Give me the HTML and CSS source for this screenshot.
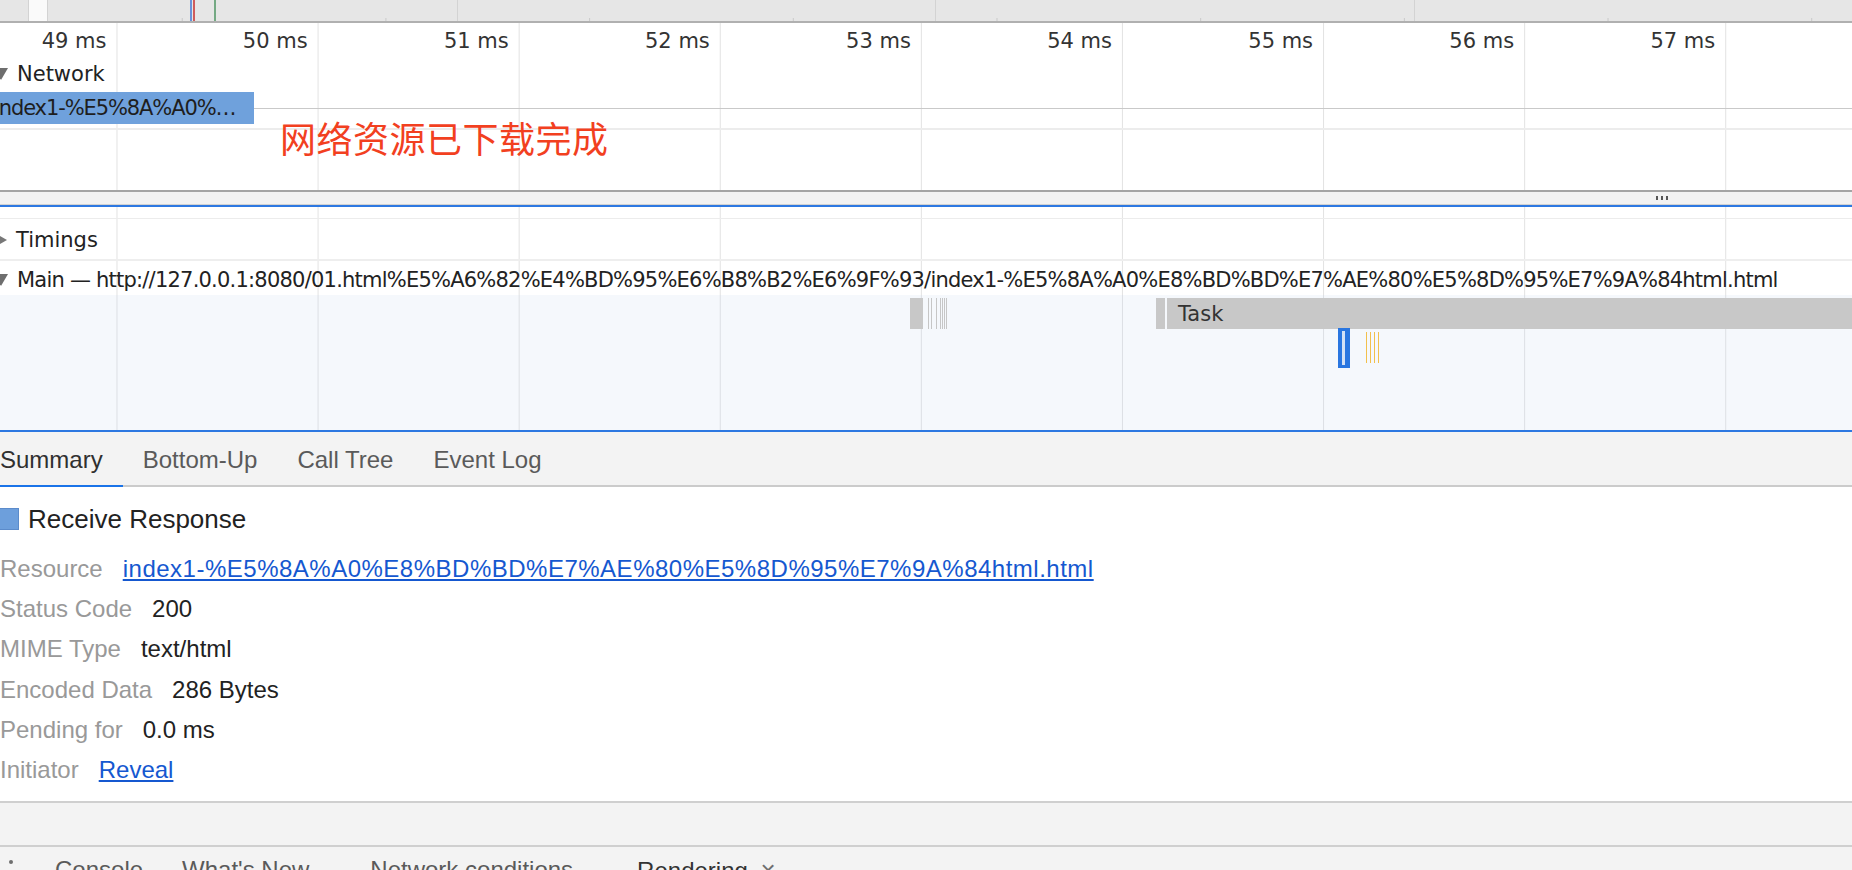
FILE: index.html
```html
<!DOCTYPE html>
<html>
<head>
<meta charset="utf-8">
<title>Performance</title>
<link rel="stylesheet" href="styles.css">
</head>
<body>
<div class="overview">
  <div class="ov-seg ov-a"></div>
  <div class="ov-seg ov-b"></div>
  <div class="ov-seg ov-c"></div>
  <div class="ov-seg ov-d"></div>
  <div class="ov-seg ov-e"></div>
  <div class="ov-seg ov-f"></div>
  <span class="marker m-blue"></span>
  <span class="marker m-red"></span>
  <span class="marker m-green"></span>
</div>

<div class="timeline grid">
  <div class="ruler">
    <div class="tick first">49 ms</div>
    <div class="tick">50 ms</div>
    <div class="tick">51 ms</div>
    <div class="tick">52 ms</div>
    <div class="tick">53 ms</div>
    <div class="tick">54 ms</div>
    <div class="tick">55 ms</div>
    <div class="tick">56 ms</div>
    <div class="tick">57 ms</div>
  </div>
  <div class="track-header net-header"><span class="tri-down"></span><span>Network</span></div>
  <div class="net-track">
    <div class="net-bar"><span class="net-bar-text">index1-%E5%8A%A0%…</span></div>
    <div class="annotation">网络资源已下载完成</div>
  </div>
</div>

<div class="splitter">
  <svg class="grip" width="14" height="6" viewBox="0 0 14 6"><rect x="1" y="1" width="2" height="4" fill="#555"/><rect x="6" y="1" width="2" height="4" fill="#555"/><rect x="11" y="1" width="2" height="4" fill="#555"/></svg>
</div>

<div class="flame grid">
  <div class="flame-ruler"></div>
  <div class="track-header timings"><span class="tri-right"></span><span>Timings</span></div>
  <div class="track-header main-header"><span class="tri-down"></span><span class="url">Main — http://127.0.0.1:8080/01.html%E5%A6%82%E4%BD%95%E6%B8%B2%E6%9F%93/index1-%E5%8A%A0%E8%BD%BD%E7%AE%80%E5%8D%95%E7%9A%84html.html</span></div>
  <div class="flame-canvas">
    <div class="ev ev-gray ev-a"></div>
    <div class="ev ev-line" style="left:928px"></div>
    <div class="ev ev-line" style="left:931px"></div>
    <div class="ev ev-line" style="left:936px"></div>
    <div class="ev ev-line" style="left:940px"></div>
    <div class="ev ev-line" style="left:942px"></div>
    <div class="ev ev-line" style="left:944px"></div>
    <div class="ev ev-line" style="left:946px"></div>
    <div class="ev ev-gray ev-b"></div>
    <div class="ev task">Task</div>
    <div class="ev selected"><span class="sel-inner"></span></div>
    <div class="ev yellow" style="left:1366px"></div>
    <div class="ev yellow" style="left:1370px"></div>
    <div class="ev yellow" style="left:1374px"></div>
    <div class="ev yellow" style="left:1378px"></div>
  </div>
</div>

<div class="tabs">
  <div class="tab active">Summary</div>
  <div class="tab">Bottom-Up</div>
  <div class="tab">Call Tree</div>
  <div class="tab">Event Log</div>
</div>

<div class="summary">
  <div class="sum-title"><span class="swatch"></span><span>Receive Response</span></div>
  <div class="sum-row"><span class="label">Resource</span><a class="link res-link" href="#">index1-%E5%8A%A0%E8%BD%BD%E7%AE%80%E5%8D%95%E7%9A%84html.html</a></div>
  <div class="sum-row"><span class="label">Status Code</span><span class="value">200</span></div>
  <div class="sum-row"><span class="label">MIME Type</span><span class="value">text/html</span></div>
  <div class="sum-row"><span class="label">Encoded Data</span><span class="value">286 Bytes</span></div>
  <div class="sum-row"><span class="label">Pending for</span><span class="value">0.0 ms</span></div>
  <div class="sum-row"><span class="label">Initiator</span><a class="link" href="#">Reveal</a></div>
</div>

<div class="drawer-gap"></div>

<div class="drawer-tabs">
  <svg class="menu-dots" width="6" height="30" viewBox="0 0 6 30"><circle cx="3" cy="2" r="2" fill="#6e6e6e"/><circle cx="3" cy="14" r="2" fill="#6e6e6e"/><circle cx="3" cy="26" r="2" fill="#6e6e6e"/></svg>
  <div class="dtab dt-console">Console</div>
  <div class="dtab dt-new">What's New</div>
  <div class="dtab dt-net">Network conditions</div>
  <div class="dtab dt-render active">Rendering <span class="close">×</span></div>
</div>
</body>
</html>
```

FILE: styles.css
```css
* { box-sizing: border-box; }
html, body { margin: 0; padding: 0; }
body {
  width: 1852px;
  height: 870px;
  overflow: hidden;
  background: #fff;
  font-family: "DejaVu Sans", "Noto Sans", sans-serif;
  color: #222;
}

/* ---------- overview strip ---------- */
.overview {
  position: relative;
  display: flex;
  height: 23px;
  border-bottom: 2px solid #b0b0b0;
  background:
    linear-gradient(90deg, transparent 182px, #c9c9c9 182px, #c9c9c9 183px, transparent 183px) 0 100% / 203.7px 3px repeat-x,
    #e6e6e6;
}
.ov-seg { height: 100%; border-right: 1px solid #d3d3d3; flex: none; }
.ov-a { width: 29px; }
.ov-b { width: 19px; background: #fafafa; }
.ov-c { width: 410px; }
.ov-d { width: 478px; }
.ov-e { width: 479px; }
.ov-f { flex: 1; border-right: 0; }
.marker { position: absolute; top: 0; height: 21px; width: 2px; }
.m-blue { left: 190px; background: #6a92d8; }
.m-red { left: 193px; background: #cf5b5b; }
.m-green { left: 214px; background: #74a983; }

/* ---------- grid ---------- */
.grid {
  background-image: linear-gradient(90deg, transparent 116px, #e2e2e2 116px, #e2e2e2 117px, transparent 117px);
  background-size: 201.1px 100%;
  background-repeat: repeat-x;
}

/* ---------- timeline (ruler + network) ---------- */
.timeline { border-bottom: 2px solid #a4a4a4; }
.ruler { display: flex; height: 34px; padding-top: 2px; line-height: 32px; font-size: 21px; color: #333; }
.tick { flex: 0 0 201.1px; text-align: right; padding-right: 10px; white-space: nowrap; }
.tick.first { flex-basis: 116.5px; }

.track-header {
  display: flex;
  align-items: center;
  gap: 9px;
  font-size: 21px;
  color: #222;
  white-space: nowrap;
}
.net-header { height: 32px; padding-top: 2px; }
.tri-down {
  width: 0; height: 0;
  margin-left: -6px;
  border-left: 7px solid transparent;
  border-right: 7px solid transparent;
  border-top: 12px solid #6e6e6e;
}
.tri-right {
  width: 0; height: 0;
  margin-left: -2px;
  border-top: 5px solid transparent;
  border-bottom: 5px solid transparent;
  border-left: 9px solid #777;
}

.net-track {
  position: relative;
  height: 101px;
  background:
    linear-gradient(#c9c9c9, #c9c9c9) 0 19px / 100% 1px no-repeat,
    linear-gradient(#ececec, #ececec) 0 39px / 100% 2px no-repeat;
}
.net-bar {
  position: absolute;
  left: 0; top: 3px;
  width: 254px; height: 32px;
  background: #6fa1dc;
  overflow: hidden;
  white-space: nowrap;
  font-size: 21px;
  line-height: 32px;
  color: #1e1e1e;
}
.net-bar-text { display: block; margin-left: -6px; letter-spacing: -1.1px; }
.annotation {
  position: absolute;
  left: 280px; top: 30px;
  font-family: "Noto Sans CJK SC", sans-serif;
  font-size: 36px;
  line-height: 36px;
  letter-spacing: 0.5px;
  color: #f2401f;
  white-space: nowrap;
}

/* ---------- splitter ---------- */
.splitter {
  position: relative;
  height: 13px;
  background: #f2f2f2;
  border-bottom: 1px solid #d2d2d2;
}
.grip { position: absolute; left: 1655px; top: 3px; }

/* ---------- flame chart ---------- */
.flame { border-top: 2px solid #2d78e1; border-bottom: 2px solid #2d78e1; }
.flame-ruler { height: 12px; border-bottom: 1px solid #ececec; }
.timings { height: 42px; padding-top: 2px; border-bottom: 2px solid #eeeeee; }
.main-header { height: 34px; padding-top: 4px; }
.url { letter-spacing: -0.78px; }
.flame-canvas {
  position: relative;
  height: 135px;
  background:
    linear-gradient(90deg, transparent 116px, #dcdfe4 116px, #dcdfe4 117px, transparent 117px) 0 0 / 201.1px 100% repeat-x,
    #f5f8fc;
}
.ev { position: absolute; top: 3px; height: 31px; }
.ev-gray { background: #c8c8c8; }
.ev-a { left: 910px; width: 13px; }
.ev-b { left: 1156px; width: 9px; }
.ev-line { width: 1px; background: #c6c6c6; }
.task {
  left: 1167px; right: 0;
  background: #c8c8c8;
  font-size: 21px;
  line-height: 33px;
  padding-left: 11px;
  color: #333;
}
.selected {
  left: 1338px; top: 33px;
  width: 12px; height: 40px;
  background: #2a76e0;
}
.sel-inner {
  display: block;
  margin: 3px 0 0 4px;
  width: 3px; height: 34px;
  background: #d4e1f5;
}
.yellow { top: 37px; height: 31px; width: 1px; background: #f2c04c; }

/* ---------- tabs ---------- */
.tabs {
  display: flex;
  height: 55px;
  margin-left: -20px;
  background: #f3f3f3;
  border-bottom: 2px solid #cbcbcb;
  font-family: "Liberation Sans", Arial, sans-serif;
  font-size: 24px;
  color: #5a5a5a;
}
.tab {
  height: 55px;
  margin-bottom: -2px;
  padding: 0 20px;
  line-height: 55px;
  border-bottom: 2px solid transparent;
  white-space: nowrap;
}
.tab.active { color: #303030; border-bottom-color: #1a73e8; }

/* ---------- summary ---------- */
.summary {
  height: 314px;
  padding-top: 12px;
  font-family: "Liberation Sans", Arial, sans-serif;
  font-size: 24px;
  color: #222;
}
.sum-title {
  display: flex;
  align-items: center;
  gap: 9px;
  height: 40px;
  margin-bottom: 10px;
  font-size: 26px;
  color: #222;
}
.swatch {
  width: 22px; height: 22px;
  margin-left: -3px;
  background: #6d9fdc;
  border: 1px solid #5b8bcb;
}
.sum-row {
  display: flex;
  gap: 20px;
  height: 40.2px;
  line-height: 40.2px;
  white-space: nowrap;
}
.label { color: #999; }
.value { color: #222; }
.link { color: #1558d0; text-decoration: underline; }
.res-link { letter-spacing: 0.5px; }

/* ---------- drawer ---------- */
.drawer-gap {
  height: 46px;
  background: #f3f3f3;
  border-top: 2px solid #cfcfcf;
  border-bottom: 2px solid #cfcfcf;
}
.drawer-tabs {
  display: flex;
  align-items: flex-start;
  height: 23px;
  padding-top: 8px;
  background: #f3f3f3;
  font-family: "Liberation Sans", Arial, sans-serif;
  font-size: 24px;
  line-height: 30px;
  color: #5a5a5a;
  white-space: nowrap;
}
.menu-dots { margin-left: 8px; margin-top: 5px; flex: none; }
.dtab { flex: none; }
.dt-console { margin-left: 41px; }
.dt-new { margin-left: 39px; }
.dt-net { margin-left: 61px; }
.dt-render { margin-left: 64px; color: #333; }
.close { margin-left: 6px; color: #6e6e6e; font-size: 26px; }
```
